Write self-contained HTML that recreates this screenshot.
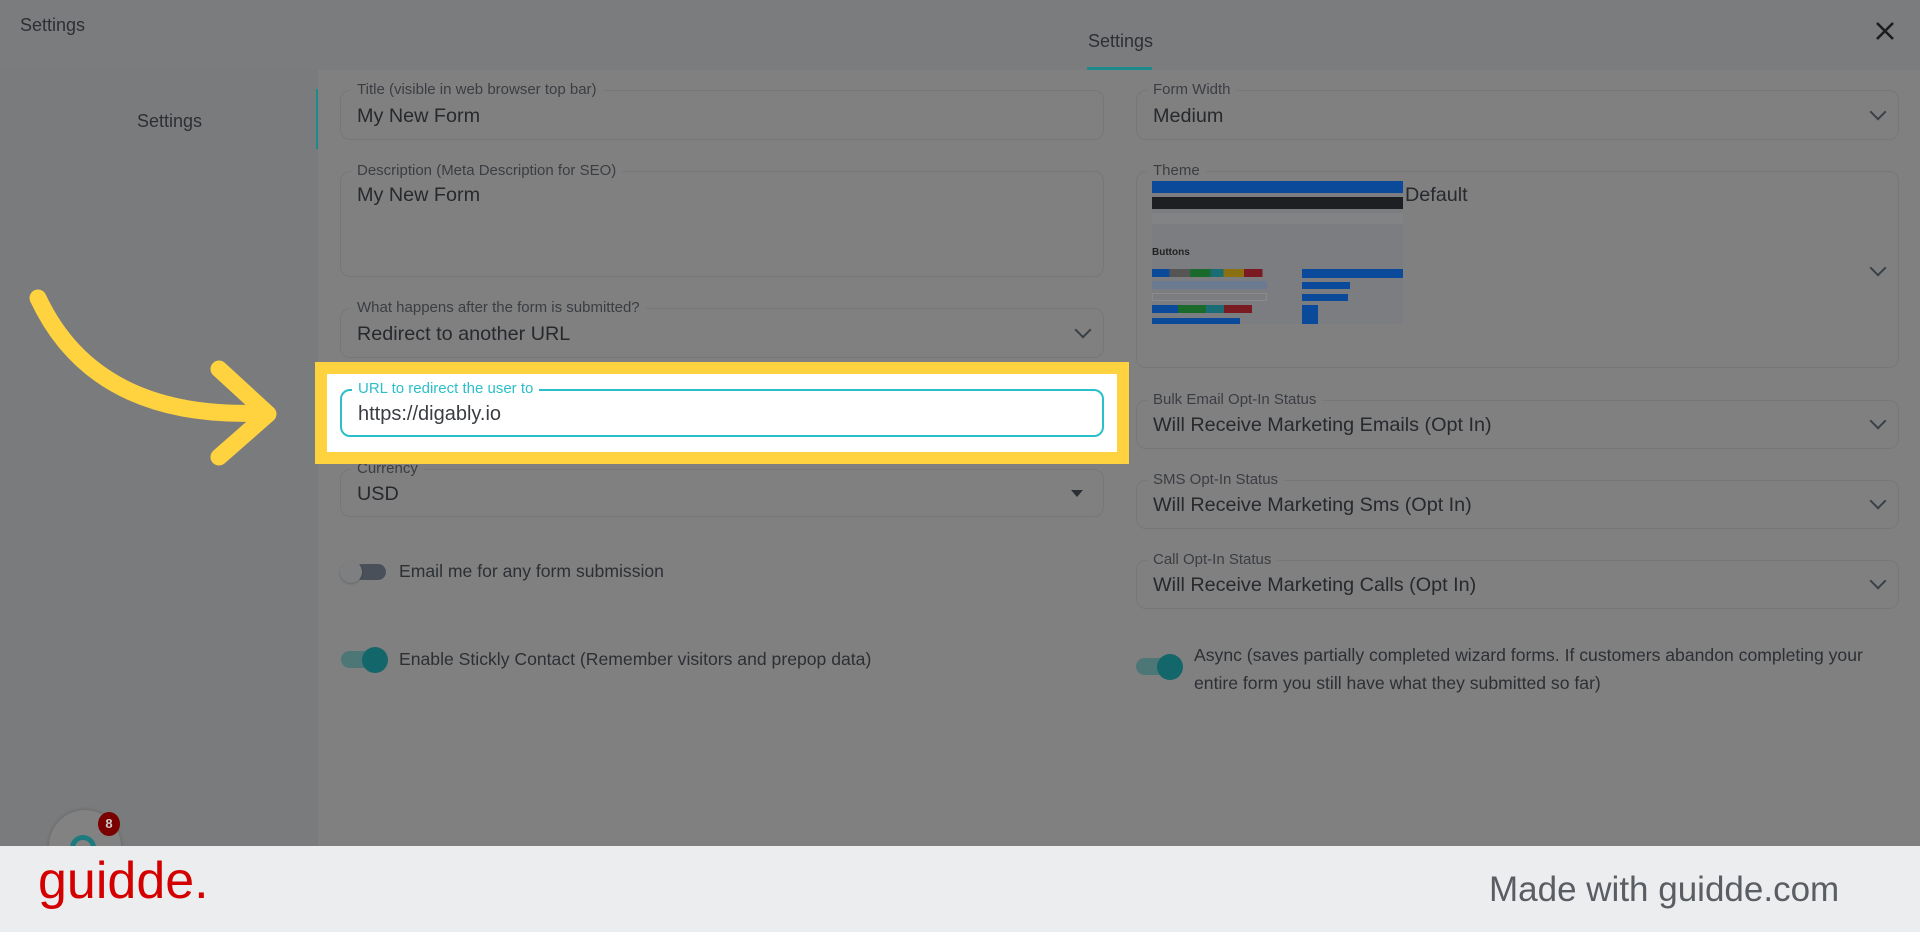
<!DOCTYPE html>
<html><head><meta charset="utf-8"><style>
*{box-sizing:border-box;margin:0;padding:0}
body{width:1920px;height:932px;overflow:hidden;background:#808080;font-family:"Liberation Sans","DejaVu Sans",sans-serif;color:#2c2f34;position:relative}
.a{position:absolute}
.f{position:absolute;border:1.5px solid #767778;border-radius:10px}
.f .l{position:absolute;top:-10px;left:10px;padding:0 6px;background:#808080;font-size:15px;color:#3a3d42;white-space:nowrap;line-height:18px}
.f .v{position:absolute;left:16px;font-size:19.8px;color:#26292d;white-space:nowrap}
.chev{position:absolute;right:14px;width:12px;height:12px;border-right:2.5px solid #3a4048;border-bottom:2.5px solid #3a4048;transform:rotate(45deg)}
.t{font-size:17.6px;color:#2c2f34;white-space:nowrap}
</style></head><body>
<div class="a" style="left:0;top:0;width:1920px;height:70px;background:#7b7c7d"></div>
<div class="a" style="left:0;top:70px;width:318px;height:776px;background:#7a7b7c"></div>
<div class="a t" style="left:20px;top:15px;font-size:18px">Settings</div>
<div class="a t" style="left:1088px;top:31px;font-size:18px">Settings</div>
<div class="a" style="left:1087px;top:67px;width:65px;height:3px;background:#1f8a8c"></div>
<svg class="a" style="left:1874px;top:20px" width="22" height="22"><path d="M3 3L19 19M19 3L3 19" stroke="#1a1c1f" stroke-width="2.6"/></svg>
<div class="a t" style="left:137px;top:111px;font-size:18px">Settings</div>
<div class="a" style="left:316px;top:89px;width:2px;height:60px;background:#1f8a8c"></div>

<div class="f" style="left:340px;top:90px;width:764px;height:50px"><span class="l">Title (visible in web browser top bar)</span><span class="v" style="top:14px">My New Form</span></div>
<div class="f" style="left:340px;top:171px;width:764px;height:106px"><span class="l">Description (Meta Description for SEO)</span><span class="v" style="top:12px">My New Form</span></div>
<div class="f" style="left:340px;top:308px;width:764px;height:50px"><span class="l">What happens after the form is submitted?</span><span class="v" style="top:14px">Redirect to another URL</span><span class="chev" style="top:15px"></span></div>
<div class="f" style="left:340px;top:469px;width:764px;height:48px"><span class="l">Currency</span><span class="v" style="top:13px">USD</span><span class="a" style="right:20px;top:20px;border-left:6px solid transparent;border-right:6px solid transparent;border-top:7px solid #2c3036"></span></div>

<div class="a" style="left:315px;top:362px;width:814px;height:102px;background:#ffd23f"></div>
<div class="a" style="left:327px;top:374px;width:790px;height:78px;background:#fff"></div>
<div class="a" style="left:340px;top:389px;width:764px;height:48px;border:2px solid #2bbfc9;border-radius:10px">
<span class="a" style="top:-11px;left:10px;padding:0 6px;background:#fff;font-size:15px;color:#2bbfc9;line-height:18px">URL to redirect the user to</span>
<span class="a" style="left:16px;top:12px;font-size:20px;color:#3a3d42">https://digably.io</span></div>

<div class="a" style="left:354px;top:564px;width:32px;height:16px;border-radius:8px;background:#4a5059"></div>
<div class="a" style="left:340px;top:561px;width:22px;height:22px;border-radius:50%;background:#7e7f80;box-shadow:0 1px 2px rgba(0,0,0,.2)"></div>
<div class="a t" style="left:399px;top:561px">Email me for any form submission</div>
<div class="a" style="left:341px;top:651px;width:34px;height:17px;border-radius:9px;background:#4d7677"></div>
<div class="a" style="left:362px;top:647px;width:26px;height:26px;border-radius:50%;background:#13666a"></div>
<div class="a t" style="left:399px;top:649px">Enable Stickly Contact (Remember visitors and prepop data)</div>

<div class="f" style="left:1136px;top:90px;width:763px;height:50px"><span class="l">Form Width</span><span class="v" style="top:14px">Medium</span><span class="chev" style="top:15px"></span></div>
<div class="f" style="left:1136px;top:171px;width:763px;height:197px"><span class="l">Theme</span><span class="v" style="left:268px;top:12px">Default</span><span class="chev" style="top:90px"></span></div>
<div class="a" style="left:1152px;top:181px;width:251px;height:143px;background:#7c7d80">
 <div class="a" style="left:0;top:0;width:251px;height:12px;background:#0b4a9a"></div>
 <div class="a" style="left:0;top:16px;width:251px;height:12px;background:#1e1f22"></div>
 <div class="a" style="left:0;top:32px;width:251px;height:11px;background:#828385"></div>
 <div class="a" style="left:0;top:66px;font-size:10px;font-weight:bold;color:#222">Buttons</div>
 <div class="a" style="left:0;top:88px;width:115px;height:8px;background:linear-gradient(90deg,#0b4a9a 0 15%,#555 15% 33%,#1a6a2c 33% 51%,#1a6c75 51% 62%,#8a7010 62% 80%,#7a1a22 80% 96%,transparent 96%)"></div>
 <div class="a" style="left:0;top:100px;width:115px;height:8px;background:#6a7a90"></div>
 <div class="a" style="left:0;top:112px;width:115px;height:8px;border:1px solid #8a8a8a"></div>
 <div class="a" style="left:0;top:124px;width:100px;height:8px;background:linear-gradient(90deg,#0b4a9a 0 26%,#1a6a2c 26% 54%,#1a6c75 54% 72%,#7a1a22 72%)"></div>
 <div class="a" style="left:0;top:137px;width:88px;height:6px;background:#0b4a9a"></div>
 <div class="a" style="left:150px;top:88px;width:101px;height:9px;background:#0b4a9a"></div>
 <div class="a" style="left:150px;top:101px;width:48px;height:7px;background:#0b4a9a"></div>
 <div class="a" style="left:150px;top:113px;width:46px;height:7px;background:#0b4a9a"></div>
 <div class="a" style="left:150px;top:124px;width:16px;height:19px;background:#0b4a9a"></div>
</div>
<div class="f" style="left:1136px;top:400px;width:763px;height:49px"><span class="l">Bulk Email Opt-In Status</span><span class="v" style="top:13px">Will Receive Marketing Emails (Opt In)</span><span class="chev" style="top:14px"></span></div>
<div class="f" style="left:1136px;top:480px;width:763px;height:49px"><span class="l">SMS Opt-In Status</span><span class="v" style="top:13px">Will Receive Marketing Sms (Opt In)</span><span class="chev" style="top:14px"></span></div>
<div class="f" style="left:1136px;top:560px;width:763px;height:49px"><span class="l">Call Opt-In Status</span><span class="v" style="top:13px">Will Receive Marketing Calls (Opt In)</span><span class="chev" style="top:14px"></span></div>
<div class="a" style="left:1136px;top:658px;width:34px;height:17px;border-radius:9px;background:#4d7677"></div>
<div class="a" style="left:1157px;top:654px;width:26px;height:26px;border-radius:50%;background:#13666a"></div>
<div class="a t" style="left:1194px;top:641px;line-height:28px">Async (saves partially completed wizard forms. If customers abandon completing your<br>entire form you still have what they submitted so far)</div>

<div class="a" style="left:49px;top:810px;width:72px;height:72px;border-radius:50%;background:#828283;box-shadow:0 0 4px rgba(0,0,0,.2)"></div>
<div class="a" style="left:70px;top:835px;width:26px;height:26px;border-radius:50%;border:5px solid #1d7b80"></div>
<div class="a" style="left:98px;top:812px;width:22px;height:24px;border-radius:50%;background:#7a0000;color:#ccc;font-size:13px;font-weight:bold;text-align:center;line-height:24px">8</div>

<svg class="a" style="left:0;top:0" width="330" height="480"><g fill="none" stroke="#ffd23f" stroke-width="17" stroke-linecap="round" stroke-linejoin="round"><path d="M38 298Q95 420 262 413"/><path d="M219 369L268 414L219 457"/></g></svg>

<div class="a" style="left:0;top:846px;width:1920px;height:86px;background:#ecedef"></div>
<div class="a" style="left:38px;top:851px;font-size:52px;color:#d40000">guidde.</div>
<div class="a" style="left:1489px;top:870px;font-size:35px;color:#5a5d63">Made with guidde.com</div>
</body></html>
